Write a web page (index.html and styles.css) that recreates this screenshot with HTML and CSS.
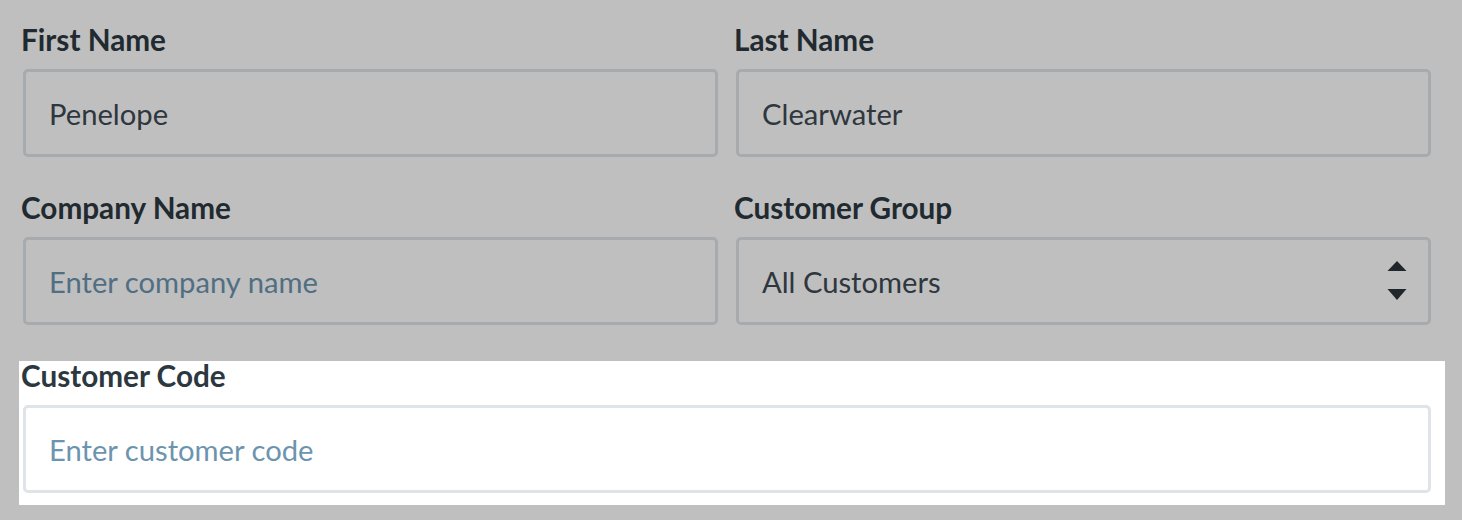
FILE: index.html
```html
<!DOCTYPE html>
<html lang="en">
<head>
<meta charset="utf-8">
<title>Customer form</title>
<link rel="stylesheet" href="styles.css">
</head>
<body>
<form class="form">
  <div class="field">
    <label class="label" for="first">First Name</label>
    <input class="input" id="first" type="text" value="Penelope">
  </div>
  <div class="field">
    <label class="label" for="last">Last Name</label>
    <input class="input" id="last" type="text" value="Clearwater">
  </div>
  <div class="field">
    <label class="label" for="company">Company Name</label>
    <input class="input" id="company" type="text" placeholder="Enter company name">
  </div>
  <div class="field">
    <label class="label" for="group">Customer Group</label>
    <div class="select-wrap">
      <div class="input select" id="group">All Customers</div>
      <svg class="select-arrows" width="20" height="42" viewBox="0 0 20 42" aria-hidden="true">
        <path d="M0.5 11 L10 1 L19.5 11 Z" fill="#2a353d"/>
        <path d="M0.5 29 L19.5 29 L10 40 Z" fill="#2a353d"/>
      </svg>
    </div>
  </div>
  <div class="field field-wide field-highlight">
    <label class="label" for="code">Customer Code</label>
    <input class="input" id="code" type="text" placeholder="Enter customer code">
  </div>
</form>
</body>
</html>
```

FILE: styles.css
```css
html, body {
  margin: 0;
  padding: 0;
  background: #ffffff;
}

body {
  font-family: Lato, "Open Sans", "Liberation Sans", sans-serif;
  width: 1462px;
  height: 520px;
  overflow: hidden;
}

.form {
  display: grid;
  grid-template-columns: 1fr 1fr;
  column-gap: 18px;
  row-gap: 34px;
  width: 1408px;
  padding: 23px 0 0 23px;
}

.field {
  display: flex;
  flex-direction: column;
  gap: 12px;
}

.field-wide {
  grid-column: 1 / span 2;
}

.label {
  font-size: 29.7px;
  line-height: 34px;
  font-weight: 700;
  color: #2c3840;
  margin-left: -2px;
}

.input {
  box-sizing: border-box;
  height: 88px;
  width: 100%;
  margin: 0;
  padding: 0 23px;
  border: 3px solid #dfe4e9;
  border-radius: 5px;
  background: #ffffff;
  font-family: Lato, "Open Sans", "Liberation Sans", sans-serif;
  font-size: 29.2px;
  color: #3e4a53;
  outline: none;
}

.input::placeholder {
  color: #6d94af;
  opacity: 1;
}

.select-wrap {
  position: relative;
}

.select {
  display: flex;
  align-items: center;
}

.select-arrows {
  position: absolute;
  right: 24px;
  top: 23px;
}

.field-highlight {
  position: relative;
}

.field-highlight::before {
  content: "";
  position: absolute;
  top: 2px;
  left: -4px;
  right: -14px;
  bottom: -12px;
  box-shadow: 0 0 0 3000px rgba(0, 0, 0, 0.25);
  pointer-events: none;
}
```
